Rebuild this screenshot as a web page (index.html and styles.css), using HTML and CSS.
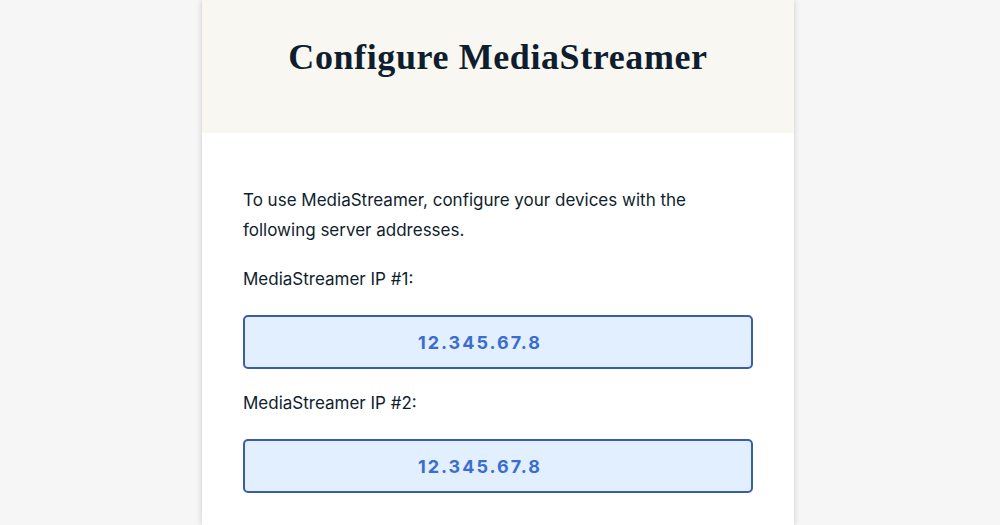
FILE: index.html
```html
<!DOCTYPE html>
<html lang="en">
<head>
    <meta charset="UTF-8">
    <meta name="viewport" content="width=device-width, initial-scale=1.0">
    <title>Configure MediaStreamer</title>
    <link rel="stylesheet" href="styles.css">
</head>

<body>

    <div class="card">
        <!-- Header -->
        <div class="card-header">
            <h1>Configure MediaStreamer</h1>
        </div>

        <!-- Server addresses -->
        <div class="card-body">
            <p class="intro">To use MediaStreamer, configure your devices with the following server addresses.</p>

            <p class="label">MediaStreamer IP #1:</p>
            <div class="ip-box">12.345.67.8</div>

            <p class="label">MediaStreamer IP #2:</p>
            <div class="ip-box">12.345.67.8</div>
        </div>
    </div>

</body>

</html>
```

FILE: styles.css
```css
/* General Styles */
body {
    font-family: 'Inter', 'Noto Sans', sans-serif;
    background-color: #f6f6f6;
    color: #0f1e2e;
    margin: 0;
    padding: 0;
    display: flex;
    justify-content: center;
}

.card {
    background-color: #fff;
    width: 592px;
    margin-right: 4px;
    min-height: 525px;
    box-shadow: 0 0 6px rgba(0, 0, 0, 0.18);
}

.card-header {
    background-color: #f8f7f1;
    height: 133px;
    display: flex;
    justify-content: center;
    align-items: center;
}

h1 {
    font-family: 'Liberation Serif', serif;
    font-size: 36px;
    font-weight: bold;
    color: #0f1e2e;
    margin: 0 0 20px 0;
    letter-spacing: 0.6px;
}

.card-body {
    padding: 52px 41px 0 41px;
}

.intro {
    font-size: 17px;
    line-height: 30px;
    margin: 0 0 19px 0;
}

.label {
    font-size: 17px;
    line-height: 30px;
    margin: 0 0 21px 0;
}

.ip-box {
    height: 50px;
    border: 2px solid #3d5ca8;
    border-radius: 5px;
    background-color: #e1efff;
    color: #3b6dd0;
    font-size: 18px;
    font-weight: 700;
    letter-spacing: 2px;
    display: flex;
    justify-content: center;
    align-items: center;
    padding-right: 36px;
    margin-bottom: 19px;
}
```
